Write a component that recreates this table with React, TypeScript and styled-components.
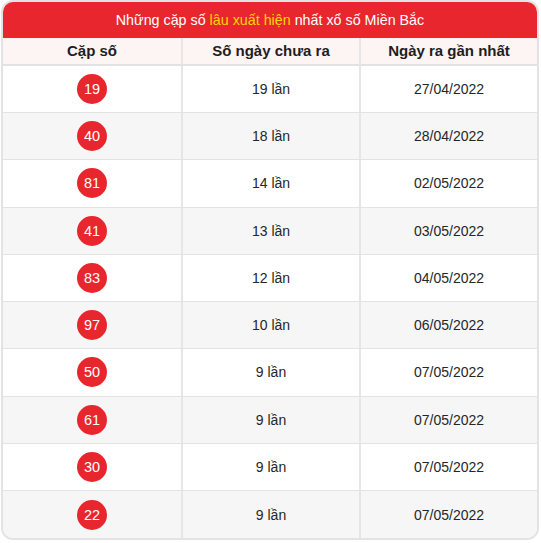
import styled, { createGlobalStyle } from 'styled-components';

const GlobalStyle = createGlobalStyle`
  body {
    margin: 0;
    background: #fff;
    font-family: "Liberation Sans", Arial, sans-serif;
  }
`;

const Card = styled.div`
  box-sizing: border-box;
  width: 538px;
  margin-left: 1px;
  border: 2px solid #e3e3e6;
  border-radius: 12px;
  overflow: hidden;
  background: #fff;
`;

const Title = styled.div`
  height: 36px;
  background: #e8262d;
  color: #fff;
  font-size: 14.3px;
  display: flex;
  align-items: center;
  justify-content: center;

  span {
    color: #ffd400;
  }
`;

const Row = styled.div<{ $alt?: boolean }>`
  box-sizing: border-box;
  display: grid;
  grid-template-columns: 1fr 1fr 1fr;
  height: 47.25px;
  background: ${(p) => (p.$alt ? '#f6f6f7' : '#fff')};
  border-bottom: 1px solid #e3e3e6;

  &:last-child {
    border-bottom: none;
  }
`;

const HeadRow = styled(Row)`
  height: 27.75px;
  background: #fdf4f4;
  border-bottom: 2px solid #e3e3e6;
`;

const Cell = styled.div`
  display: flex;
  align-items: center;
  justify-content: center;
  font-size: 14px;
  color: #262626;

  & + & {
    border-left: 2px solid #e6e6e9;
  }
`;

const HeadCell = styled(Cell)`
  font-size: 15px;
  font-weight: bold;
  color: #1e1e1e;
`;

const Ball = styled.div`
  width: 30px;
  height: 30px;
  border-radius: 50%;
  background: #e8262d;
  color: #fff;
  font-size: 14.5px;
  display: flex;
  align-items: center;
  justify-content: center;
`;

const rows = [
  ['19', 19, '27/04/2022'],
  ['40', 18, '28/04/2022'],
  ['81', 14, '02/05/2022'],
  ['41', 13, '03/05/2022'],
  ['83', 12, '04/05/2022'],
  ['97', 10, '06/05/2022'],
  ['50', 9, '07/05/2022'],
  ['61', 9, '07/05/2022'],
  ['30', 9, '07/05/2022'],
  ['22', 9, '07/05/2022'],
] as const;

export default function App() {
  return (
    <>
      <GlobalStyle />
      <Card>
        <Title>
          Những cặp số&nbsp;<span>lâu xuất hiện</span>&nbsp;nhất xổ số Miền Bắc
        </Title>
        <HeadRow>
          <HeadCell>Cặp số</HeadCell>
          <HeadCell>Số ngày chưa ra</HeadCell>
          <HeadCell>Ngày ra gần nhất</HeadCell>
        </HeadRow>
        {rows.map(([pair, days, date], i) => (
          <Row key={pair} $alt={i % 2 === 1}>
            <Cell>
              <Ball>{pair}</Ball>
            </Cell>
            <Cell>{days} lần</Cell>
            <Cell>{date}</Cell>
          </Row>
        ))}
      </Card>
    </>
  );
}
